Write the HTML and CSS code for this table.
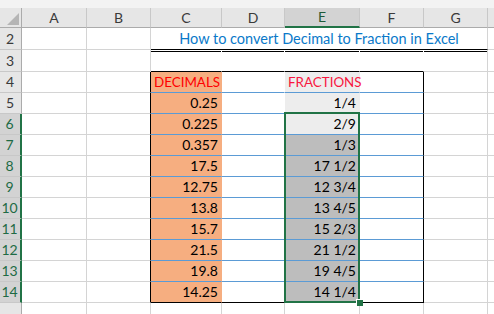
FILE: index.html
```html
<!DOCTYPE html>
<html>
<head>
<meta charset="utf-8">
<link rel="stylesheet" href="styles.css">
</head>
<body>
<div class="strip"></div>
<div class="sheet">
  <!-- header row -->
  <div class="c hd corner"><svg width="21" height="19" viewBox="0 0 21 19"><polygon points="19,5 19,17 7,17" fill="#b5b5b5"/></svg></div>
  <div class="c hd">A</div>
  <div class="c hd">B</div>
  <div class="c hd">C</div>
  <div class="c hd">D</div>
  <div class="c hd hsel">E</div>
  <div class="c hd">F</div>
  <div class="c hd">G</div>
  <div class="c hd hend"></div>

  <!-- row 2 -->
  <div class="c rh">2</div>
  <div class="c"></div>
  <div class="c"></div>
  <div class="c title">How to convert Decimal to Fraction in Excel</div>
  <div class="c end"></div>

  <!-- row 3 -->
  <div class="c rh">3</div>
  <div class="c"></div>
  <div class="c"></div>
  <div class="c dbl top"></div>
  <div class="c dbl top"></div>
  <div class="c dbl top"></div>
  <div class="c dbl top"></div>
  <div class="c dbl"></div>
  <div class="c end"></div>

  <!-- row 4 -->
  <div class="c rh">4</div>
  <div class="c"></div>
  <div class="c bl"></div>
  <div class="c dec lbl red">DECIMALS</div>
  <div class="c dd"></div>
  <div class="c fl lbl crimson">FRACTIONS</div>
  <div class="c ff"></div>
  <div class="c"></div>
  <div class="c end"></div>

  <!-- row 5 -->
  <div class="c rh">5</div>
  <div class="c"></div>
  <div class="c bl"></div>
  <div class="c dec num">0.25</div>
  <div class="c dd"></div>
  <div class="c fl num">1/4</div>
  <div class="c ff"></div>
  <div class="c"></div>
  <div class="c end"></div>

  <!-- row 6 -->
  <div class="c rh rsel">6</div>
  <div class="c"></div>
  <div class="c bl"></div>
  <div class="c dec num">0.225</div>
  <div class="c dd"></div>
  <div class="c fl num">2/9</div>
  <div class="c ff"></div>
  <div class="c"></div>
  <div class="c end"></div>

  <!-- row 7 -->
  <div class="c rh rsel">7</div>
  <div class="c"></div>
  <div class="c bl"></div>
  <div class="c dec num">0.357</div>
  <div class="c dd"></div>
  <div class="c fd num">1/3</div>
  <div class="c ff"></div>
  <div class="c"></div>
  <div class="c end"></div>

  <!-- row 8 -->
  <div class="c rh rsel">8</div>
  <div class="c"></div>
  <div class="c bl"></div>
  <div class="c dec num">17.5</div>
  <div class="c dd"></div>
  <div class="c fd num">17 1/2</div>
  <div class="c ff"></div>
  <div class="c"></div>
  <div class="c end"></div>

  <!-- row 9 -->
  <div class="c rh rsel">9</div>
  <div class="c"></div>
  <div class="c bl"></div>
  <div class="c dec num">12.75</div>
  <div class="c dd"></div>
  <div class="c fd num">12 3/4</div>
  <div class="c ff"></div>
  <div class="c"></div>
  <div class="c end"></div>

  <!-- row 10 -->
  <div class="c rh rsel">10</div>
  <div class="c"></div>
  <div class="c bl"></div>
  <div class="c dec num">13.8</div>
  <div class="c dd"></div>
  <div class="c fd num">13 4/5</div>
  <div class="c ff"></div>
  <div class="c"></div>
  <div class="c end"></div>

  <!-- row 11 -->
  <div class="c rh rsel">11</div>
  <div class="c"></div>
  <div class="c bl"></div>
  <div class="c dec num">15.7</div>
  <div class="c dd"></div>
  <div class="c fd num">15 2/3</div>
  <div class="c ff"></div>
  <div class="c"></div>
  <div class="c end"></div>

  <!-- row 12 -->
  <div class="c rh rsel">12</div>
  <div class="c"></div>
  <div class="c bl"></div>
  <div class="c dec num">21.5</div>
  <div class="c dd"></div>
  <div class="c fd num">21 1/2</div>
  <div class="c ff"></div>
  <div class="c"></div>
  <div class="c end"></div>

  <!-- row 13 -->
  <div class="c rh rsel">13</div>
  <div class="c"></div>
  <div class="c bl"></div>
  <div class="c dec num">19.8</div>
  <div class="c dd"></div>
  <div class="c fd num">19 4/5</div>
  <div class="c ff"></div>
  <div class="c"></div>
  <div class="c end"></div>

  <!-- row 14 -->
  <div class="c rh rsel">14</div>
  <div class="c"></div>
  <div class="c bl"></div>
  <div class="c dec num last">14.25</div>
  <div class="c dd last"></div>
  <div class="c fd num last">14 1/4</div>
  <div class="c ff last"></div>
  <div class="c"></div>
  <div class="c end"></div>

  <!-- row 15 -->
  <div class="c rh"></div>
  <div class="c"></div>
  <div class="c"></div>
  <div class="c"></div>
  <div class="c"></div>
  <div class="c"></div>
  <div class="c"></div>
  <div class="c"></div>
  <div class="c end"></div>

  <div class="selection"></div>
  <div class="handle"></div>
</div>
</body>
</html>
```

FILE: styles.css
```css
html, body {
  margin: 0;
  padding: 0;
  background: #ffffff;
}

body {
  width: 494px;
  height: 314px;
  overflow: hidden;
  font-family: Lato, "Open Sans", sans-serif;
  font-size: 14px;
  color: #000;
}

.strip {
  height: 8px;
  background: #f3f3f3;
}

.sheet {
  position: relative;
  display: grid;
  grid-template-columns: 22px 65px 64px 71px 63px 75px 64px 64px 6px;
  grid-template-rows: 20px 22px 22px repeat(11, 21px) 12px;
}

.c {
  box-sizing: border-box;
  border-right: 1px solid #d4d4d4;
  border-bottom: 1px solid #d4d4d4;
  display: flex;
  align-items: flex-end;
  line-height: 16px;
  padding-bottom: 2px;
  white-space: nowrap;
  overflow: hidden;
}

.end {
  border-right: none;
}

/* headers */
.hd {
  background: #e6e6e6;
  border-right-color: #c8c8c8;
  border-bottom-color: #ababab;
  justify-content: center;
  align-items: center;
  padding-bottom: 0;
  color: #3a3a3a;
  font-size: 14px;
}

.hd.corner {
  border-right-color: #ababab;
  padding: 0;
  align-items: stretch;
}

.hd.hend {
  border-right: none;
}

.hd.hsel {
  background: #d3d3d3;
  color: #1e5a38;
  border-bottom: 2px solid #217346;
}

.rh {
  background: #e6e6e6;
  border-right-color: #ababab;
  border-bottom-color: #c8c8c8;
  justify-content: center;
  padding-right: 1px;
  color: #3a3a3a;
}

.rh.rsel {
  background: #d3d3d3;
  color: #1e6b45;
  border-right: 2px solid #217346;
}

/* title */
.title {
  grid-column: span 5;
  justify-content: center;
  color: #0a79c9;
  border-bottom: 1px solid #000;
  font-size: 14.5px;
}

.dbl {
  background: linear-gradient(#000, #000) 0 1px / 100% 1px no-repeat;
}

.top {
  border-right-color: #fff;
  border-bottom-color: #000;
}

/* table block */
.bl {
  border-right-color: #000;
}

.dec {
  background: #f6ae80;
  border-right-color: #f6ae80;
  border-bottom-color: #5b9bd5;
}

.dd {
  border-right-color: #fff;
  border-bottom-color: #5b9bd5;
}

.fl {
  background: #ededed;
  border-right-color: #ededed;
  border-bottom-color: #5b9bd5;
}

.fd {
  background: #bdbdbd;
  border-right-color: #bdbdbd;
  border-bottom-color: #5b9bd5;
}

.ff {
  border-right-color: #000;
  border-bottom-color: #5b9bd5;
}

.last {
  border-bottom-color: #000;
}

.lbl {
  padding-left: 3px;
  font-size: 13.4px;
  overflow: visible;
  position: relative;
  z-index: 1;
}

.red {
  color: #ff0000;
}

.crimson {
  color: #f8173f;
}

.num {
  justify-content: flex-end;
  padding-right: 3px;
}

/* selection overlay */
.selection {
  position: absolute;
  left: 284px;
  top: 104px;
  width: 76px;
  height: 191px;
  box-sizing: border-box;
  border: 2px solid #217346;
  pointer-events: none;
}

.handle {
  position: absolute;
  left: 356px;
  top: 291px;
  width: 6px;
  height: 6px;
  background: #217346;
  border: 1px solid #fff;
  border-right: none;
  border-bottom: none;
}
```
